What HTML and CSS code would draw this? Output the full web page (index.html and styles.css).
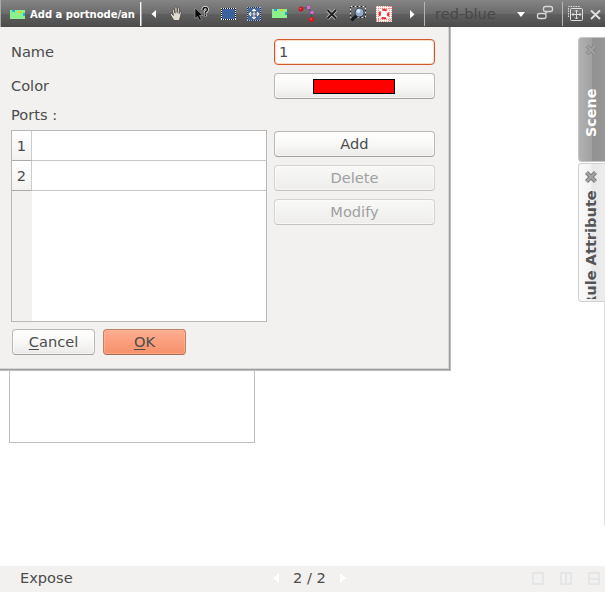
FILE: index.html
```html
<!DOCTYPE html>
<html lang="en">
<head>
<meta charset="utf-8">
<title>Add a portnode</title>
<link rel="stylesheet" href="styles.css">
</head>
<body>
<header class="toolbar">
  <div class="mode">
    <svg width="15" height="9" viewBox="0 0 15 9"><rect width="15" height="9" fill="#8cf08c"/><path d="M2 0h3v2H2zM13 3h2v3h-2z" fill="#20b8d8"/><path d="M8 1h3v2H8z" fill="#e8d020"/></svg>
    <span>Add a portnode/an</span>
  </div>
  <i class="sep sep-strong"></i>
  <svg width="23" height="27" viewBox="142 0 23 27"><path d="M156 10v8l-4.500-4z" fill="#fff"/></svg>
  <svg width="24" height="27" viewBox="165 0 24 27"><path d="M174 20.500l-3.500-5.500q-1-2 1-1.500l2 2-1.300-6q.8-1.500 1.800 0l1 3.500-.1-5.500q1-1.500 2 0l.2 5 .7-4.500q1-1.300 1.700 0l-.2 5.500 .8-2q1.300-1 1.500.5l-1.300 5-1 3.500z" fill="#e2dbd1" stroke="#3a3a3a" stroke-width=".7"/><path d="M175 11l.8 3M178 10v4M180 11l-.3 3" stroke="#77716b" stroke-width=".5"/></svg>
  <svg width="26" height="27" viewBox="189 0 26 27"><path d="M195 8v10.500l2.500-2 2 4 2-1-2-4h3.300z" fill="#080808" stroke="#aaa" stroke-width=".6"/><path d="M203 10q0-2.500 2.200-2.500t2.200 2q0 1.500-2 2.600v1.400M205.400 14.500v1.800" fill="none" stroke="#e8e8e8" stroke-width="3"/><path d="M203 10q0-2.500 2.200-2.500t2.200 2q0 1.500-2 2.600v1.400M205.400 14.500v1.500" fill="none" stroke="#111" stroke-width="1.500"/></svg>
  <svg width="26" height="27" viewBox="215 0 26 27"><path d="M221.500 8.500h14v11h-14z" fill="#3b629c" stroke="#161616"/><path d="M221 8.500h15M221 19.500h15M221.500 8v12M235.500 8v12" fill="none" stroke="#f0f0f0" stroke-dasharray="1 1"/></svg>
  <svg width="26" height="27" viewBox="241 0 26 27"><path d="M247.500 7.500h13v13h-13z" fill="#4569a0" stroke="#24324a"/><path d="M247 7.500h14M247 20.500h14M247.500 7v14M260.500 7v14" fill="none" stroke="#a8b8d0" stroke-dasharray="1 1"/><path d="M254 9v10M249 14h10M252 11l2-2 2 2M252 17l2 2 2-2M251 12l-2 2 2 2M257 12l2 2-2 2" fill="none" stroke="#1b2d48" stroke-width="2.200"/><path d="M254 9v10M249 14h10M252 11l2-2 2 2M252 17l2 2 2-2M251 12l-2 2 2 2M257 12l2 2-2 2" fill="none" stroke="#f4f4f4" stroke-width="1.200"/></svg>
  <svg width="26" height="27" viewBox="267 0 26 27"><rect x="272" y="9" width="15" height="9" fill="#8cf08c"/><path d="M274 9h3v2h-3zM285 12h2v3h-2z" fill="#20a8d8"/><path d="M280 9h3v2h-3z" fill="#e8d020"/></svg>
  <svg width="27" height="27" viewBox="293 0 27 27"><path d="M301 8h7l3.500 4v8" fill="none" stroke="#36507c"/><circle cx="301" cy="9" r="2.500" fill="#cc1720"/><circle cx="300.500" cy="8.500" r=".8" fill="#f66"/><circle cx="311.500" cy="19.500" r="2.600" fill="#d9181d"/><circle cx="311" cy="19" r=".8" fill="#f77"/><path d="M307 6h3v3h-3zM310.500 11h3v3h-3z" fill="#e85fda"/></svg>
  <svg width="25" height="27" viewBox="320 0 25 27"><path d="M327.500 10l8.500 8.500M336 10l-8.500 8.500" stroke="#c4c4c4" stroke-width="3.600"/><path d="M327.500 10l8.500 8.500M336 10l-8.500 8.500" stroke="#202020" stroke-width="2"/></svg>
  <svg width="26" height="27" viewBox="345 0 26 27"><path d="M350.500 6.500h15v11h-15z" fill="none" stroke="#161616"/><path d="M350.500 6.500h15v11h-15z" fill="none" stroke="#e8e8e8" stroke-dasharray="2 2"/><path d="M356.500 15.500l-5 5" stroke="#171b22" stroke-width="3"/><circle cx="359.500" cy="12.500" r="4.500" fill="#91a9c6" stroke="#303e50"/><circle cx="358.500" cy="11" r="2" fill="#d7e4f1"/></svg>
  <svg width="26" height="27" viewBox="371 0 26 27"><path d="M376 6h16v16h-16z" fill="#fff2f0"/><path d="M376 6.500h16M376 8.500h16M376 19.500h16M376 21.500h16M376.500 6v16M378.500 6v16M389.500 6v16M391.500 6v16" fill="none" stroke="#f28a8a" stroke-dasharray="1 1"/><circle cx="384" cy="14" r="4.300" fill="#fff" stroke="#e92d2d" stroke-width="2" stroke-dasharray="4.500 2.250" stroke-dashoffset="2.200"/><path d="M379 14h2M387 14h2M384 9v2M384 17v2" stroke="#f23b3b"/></svg>
  <svg width="27" height="27" viewBox="397 0 27 27"><path d="M410 10v8.500l4.500-4z" fill="#fff"/></svg>
  <i class="sep"></i>
  <div class="combo"><span>red-blue</span><svg width="8" height="5" viewBox="0 0 8 5"><path d="M0 0h8L4 5z" fill="#fff"/></svg></div>
  <svg width="32" height="27" viewBox="530 0 32 27"><g fill="none" stroke="#d8d8d8" stroke-width="1.300"><rect x="543.500" y="6.500" width="9" height="5" rx="2"/><rect x="537.500" y="13.500" width="8.500" height="5" rx="2"/><path d="M547 12l-2 2"/></g></svg>
  <i class="sep"></i>
  <svg width="24" height="27" viewBox="563 0 24 27"><g fill="none" stroke="#dedede"><path d="M579.500 6.500h-11v11" stroke-dasharray="1.500 1"/><rect x="570.500" y="8.500" width="12" height="12" rx="1"/><path d="M576.500 10v9M572 14.500h9M575 11.500l1.500-1.500 1.500 1.500M575 17.500l1.500 1.500 1.500-1.500M573.500 13l-1.500 1.500 1.500 1.500M579.500 13l1.500 1.500-1.500 1.500"/></g></svg>
  <svg width="18" height="27" viewBox="587 0 18 27"><path d="M591 10.500l9 8.500M600 10.500l-9 8.500" stroke="#e2e2e2" stroke-width="1.800"/></svg>
</header>

<main class="workspace">
  <section class="canvas"><div class="note"></div></section>
  <nav class="tabs">
    <div class="tab tab-active">
      <svg width="12" height="12" viewBox="0 0 12 12"><path d="M2 2l8 8M10 2l-8 8" stroke="#868686" stroke-width="3.600"/><path d="M2 2l8 8M10 2l-8 8" stroke="#a2a2a2" stroke-width="2"/></svg>
      <span>Scene</span>
    </div>
    <div class="tab">
      <svg width="14" height="14" viewBox="0 0 14 14"><path d="M2.500 2.500l9 9M11.500 2.500l-9 9" stroke="#777" stroke-width="4.200"/><path d="M2.500 2.500l9 9M11.500 2.500l-9 9" stroke="#a4a4a4" stroke-width="2.400"/></svg>
      <span>Rule Attribute</span>
    </div>
    <i class="edge"></i>
  </nav>

  <form class="dialog">
    <div class="row"><label>Name</label><div class="field">1</div></div>
    <div class="row row-color"><label>Color</label><div class="button"><i class="swatch"></i></div></div>
    <div class="ports-label">Ports :</div>
    <div class="ports">
      <div class="table">
        <div class="line"><b>1</b></div>
        <div class="line"><b>2</b></div>
        <div class="rest">
          <div class="hint">
            <p class="hint-title">Create new portnode</p>
            <p><strong>Left Click</strong> on a source port to start<br>adding a new edge then left click on<br>the destination port.</p>
          </div>
        </div>
      </div>
      <div class="actions">
        <div class="button">Add</div>
        <div class="button disabled">Delete</div>
        <div class="button disabled">Modify</div>
      </div>
    </div>
    <div class="buttons">
      <div class="button"><span><u>C</u>ancel</span></div>
      <div class="button ok"><span><u>O</u>K</span></div>
    </div>
  </form>
</main>

<footer class="status">
  <span class="expose">Expose</span>
  <div class="pager">
    <svg width="6" height="10" viewBox="0 0 6 10"><path d="M6 0v10L0 5z" fill="#fff"/></svg>
    <span>2 / 2</span>
    <svg width="6" height="10" viewBox="0 0 6 10"><path d="M0 0v10l6-5z" fill="#fff"/></svg>
  </div>
  <div class="views">
    <svg width="12" height="13" viewBox="0 0 12 13"><path d="M1 1h10v11H1z"/></svg>
    <svg width="12" height="13" viewBox="0 0 12 13"><path d="M1 1h10v11H1zM6 1v11"/></svg>
    <svg width="12" height="13" viewBox="0 0 12 13"><path d="M1 1h10v11H1zM1 7h10"/></svg>
  </div>
</footer>
</body>
</html>
```
FILE: styles.css
```css
* { box-sizing: border-box; }

body {
  margin: 0;
  width: 605px;
  height: 592px;
  display: flex;
  flex-direction: column;
  overflow: hidden;
  background: #fff;
  color: #4c4c4c;
  font: 14.6px/18px "DejaVu Sans", sans-serif;
}

p { margin: 0; }

svg { display: block; flex: none; }

.toolbar {
  height: 27px;
  flex: none;
  display: flex;
  align-items: center;
  background: linear-gradient(#858585, #6b6b6b 50%, #606060 51%, #4b4b4b);
}

.mode {
  width: 140px;
  height: 27px;
  padding: 2px 0 0 9px;
  border-left: 1px solid #aaa;
  display: flex;
  align-items: center;
  gap: 5px;
  color: #fff;
  font-size: 10px;
  font-weight: bold;
  white-space: nowrap;
}

.sep { width: 1px; height: 24px; flex: none; background: #b5b5b5; }
.sep-strong { width: 2px; background: linear-gradient(90deg, #f8f8f8 50%, #a8a8a8 50%); }

.combo {
  width: 105px;
  padding: 1px 5px 0 10px;
  display: flex;
  align-items: center;
  justify-content: space-between;
  color: #484848;
}

.workspace {
  height: 539px;
  position: relative;
  display: flex;
  justify-content: space-between;
}

.canvas { padding-left: 9px; }
.note { width: 246px; height: 416px; border: 1px solid #c0bfbb; }

.tabs {
  width: 27px;
  padding-top: 10px;
  display: flex;
  flex-direction: column;
}

.tab {
  height: 139px;
  margin-top: 1px;
  padding: 6px 2px 2px 0;
  display: flex;
  flex-direction: column;
  align-items: center;
  gap: 6px;
  border: 1px solid #d2d2d2;
  border-right: 0;
  border-radius: 4px 0 0 4px;
  background: linear-gradient(90deg, #fafafa, #f3f3f3 45%, #e8e8e8 50%, #ececec);
  color: #555;
  font-weight: bold;
  font-size: 14.6px;
  overflow: hidden;
}

.tab span {
  flex: 1;
  min-height: 0;
  display: flex;
  justify-content: flex-end;
  writing-mode: vertical-rl;
  transform: rotate(180deg);
  white-space: nowrap;
  overflow: hidden;
}

.tab-active {
  height: 125px;
  margin-top: 0;
  border-color: #c4c4c4;
  background: linear-gradient(90deg, #b2b2b2, #a0a0a0 50%, #929292 52%, #979797);
  color: #fff;
  font-size: 14.3px;
}

.tab-active span { justify-content: flex-start; padding-top: 22px; }

.edge { width: 1px; height: 223px; align-self: flex-end; background: #ddd; }

.dialog {
  position: absolute;
  left: 0;
  top: 0;
  width: 451px;
  height: 344px;
  padding: 12px 15px 0 11px;
  background: #f2f1ef;
  border-right: 1px solid #bbb;
  border-bottom: 1px solid #bbb;
  box-shadow: inset -1px -1px #9e9e9e, inset -2px -2px #d6d5d4;
}

.row { display: flex; justify-content: space-between; align-items: center; height: 26px; }
.row-color { margin-top: 8px; }

.field, .button {
  height: 26px;
  border-radius: 4px;
  display: flex;
  align-items: center;
}

.field, .row .button, .actions .button { width: 161px; }

.field {
  padding-left: 4px;
  background: #fff;
  border: 1px solid #d3572e;
  box-shadow: inset 0 0 0 1px #fbdccb;
}

.button {
  justify-content: center;
  border: 1px solid #bbb8b5;
  border-bottom-color: #a29f9c;
  background: linear-gradient(#fff, #f8f8f7 50%, #ebeae9);
  box-shadow: inset 0 0 0 1px rgba(255, 255, 255, .5);
}

.disabled {
  color: #a0a0a0;
  border-color: #d5d3d1;
  border-bottom-color: #c5c3c1;
  background: linear-gradient(#f8f8f7, #eeedec);
}

.swatch { width: 82px; height: 15px; margin-right: 1px; background: #f00; border: 1px solid #000; }

.ports-label { height: 18px; margin-top: 7px; }

.ports { display: flex; justify-content: space-between; margin-top: 6px; }

.table {
  width: 256px;
  height: 192px;
  border: 1px solid #b9b7b5;
  background: #fff;
  display: flex;
  flex-direction: column;
}

.line { height: 30px; flex: none; border-bottom: 1px solid #c6c5c3; }

.line b {
  display: flex;
  align-items: center;
  justify-content: center;
  width: 20px;
  height: 30px;
  padding-top: 1px;
  font-weight: normal;
  border-right: 1px solid #ccc;
  border-bottom: 1px solid #aaa;
  background: linear-gradient(#fff, #f3f2f1);
}

.rest { flex: 1; background: linear-gradient(90deg, #f2f1ef 20px, #fff 20px); }

.hint {
  padding: 38px 0 0 3px;
  color: rgba(0, 0, 0, .012);
  font-size: 12.6px;
  line-height: 15px;
  white-space: nowrap;
}

.hint-title { padding-left: 4px; margin-bottom: 17px; font-size: 14.6px; line-height: 18px; }

.actions { display: grid; gap: 8px; align-content: start; padding-top: 1px; }

.buttons { display: flex; gap: 8px; margin: 7px 0 0 1px; }
.buttons .button { width: 83px; }
.buttons u { text-underline-offset: 2px; text-decoration-thickness: 1px; }

.ok {
  border-color: #bf806a;
  border-bottom-color: #a56c56;
  background: linear-gradient(#ffad91, #f99b78 60%, #f6916b);
  box-shadow: inset 0 0 0 1px rgba(255, 190, 160, .5);
}

.status {
  height: 26px;
  flex: none;
  display: flex;
  align-items: center;
  background: #f2f1ef;
  padding: 0 5px 2px 20px;
}

.expose { width: 253px; }
.pager { display: flex; align-items: center; gap: 14px; }

.views { margin-left: auto; display: flex; gap: 16px; }
.views path { fill: none; stroke: #e5e6e7; stroke-width: 2; }
```
